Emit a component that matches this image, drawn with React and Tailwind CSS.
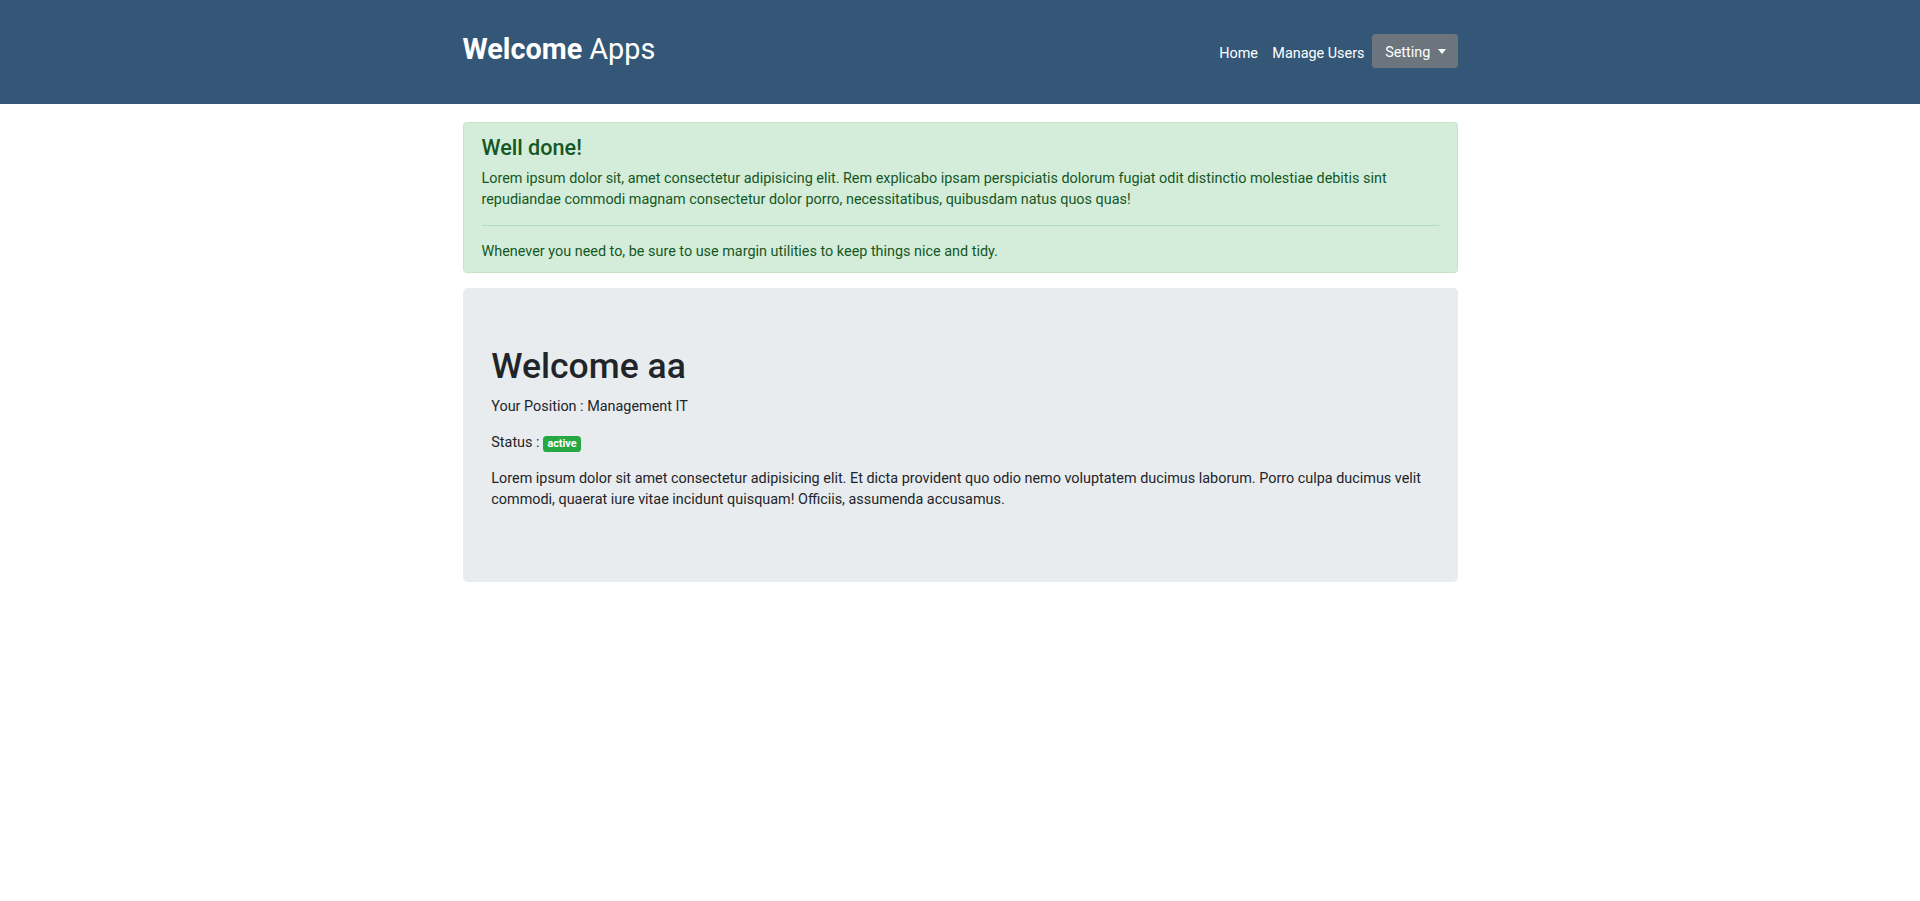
import React from 'react'

const Navbar = () => {
  return (
    <nav className="bg-[#355777] h-[104px]">
      <div className="w-[995px] mx-auto flex items-start justify-between pt-[32px]">
        <a href="#" className="text-white text-[28.8px] leading-[34.5px] whitespace-nowrap">
          <span className="font-bold">Welcome</span> Apps
        </a>
        <ul className="flex items-center mt-[2px]">
          <li>
            <a href="#" className="block text-white text-[14.4px] leading-[21.6px] px-[7.2px] pt-[8.6px] pb-[3.8px]">Home</a>
          </li>
          <li>
            <a href="#" className="block text-white text-[14.4px] leading-[21.6px] px-[7.2px] pt-[8.6px] pb-[3.8px]">Manage Users</a>
          </li>
          <li>
            <button className="flex items-center h-[34.2px] pl-[13.5px] pr-[11.7px] pt-[2.6px] rounded-[3.6px] bg-[#6c757d] text-white text-[14.4px] leading-[21.6px]">
              Setting
              <span className="ml-[7.5px] mt-[-2px] w-0 h-0 border-l-[4.3px] border-r-[4.3px] border-t-[5px] border-l-transparent border-r-transparent border-t-white" />
            </button>
          </li>
        </ul>
      </div>
    </nav>
  )
}

const App = () => {
  return (
    <div className="min-h-screen bg-white font-['Roboto',sans-serif] text-[#212529] text-[14.4px] leading-[21.6px]">
      <Navbar />

      <div className="w-[995px] mx-auto">
        {/* Alert */}
        <div className="mt-[18px] border-[0.9px] border-[#c3e6cb] bg-[#d4edda] text-[#155724] rounded-[3.6px] pt-[11.5px] pb-[10.1px] px-[18px]">
          <h4 className="text-[21.6px] leading-[26px] font-medium mb-[7.2px]">Well done!</h4>
          <p>
            Lorem ipsum dolor sit, amet consectetur adipisicing elit. Rem explicabo ipsam perspiciatis dolorum fugiat odit distinctio molestiae debitis sint repudiandae commodi magnam consectetur dolor porro, necessitatibus, quibusdam natus quos quas!
          </p>
          <hr className="my-[14.4px] border-0 border-t-[0.9px] border-[#b1dfbb]" />
          <p>Whenever you need to, be sure to use margin utilities to keep things nice and tidy.</p>
        </div>

        {/* Jumbotron */}
        <div className="mt-[14.4px] bg-[#e9ecef] rounded-[4.8px] pt-[57.6px] pb-[56.6px] px-[28.8px]">
          <h1 className="text-[35.5px] leading-[43.2px] font-medium mb-[7.2px]">Welcome aa</h1>
          <p className="mb-[14.4px]">Your Position : Management IT</p>
          <p className="mb-[14.4px]">
            Status :{' '}
            <span className="inline-block bg-[#28a745] text-white text-[10.8px] leading-none font-bold px-[4.3px] py-[2.7px] rounded-[3.6px] align-baseline">
              active
            </span>
          </p>
          <p className="mb-[14.4px]">
            Lorem ipsum dolor sit amet consectetur adipisicing elit. Et dicta provident quo odio nemo voluptatem ducimus laborum. Porro culpa ducimus velit commodi, quaerat iure vitae incidunt quisquam! Officiis, assumenda accusamus.
          </p>
        </div>
      </div>
    </div>
  )
}

export default App
